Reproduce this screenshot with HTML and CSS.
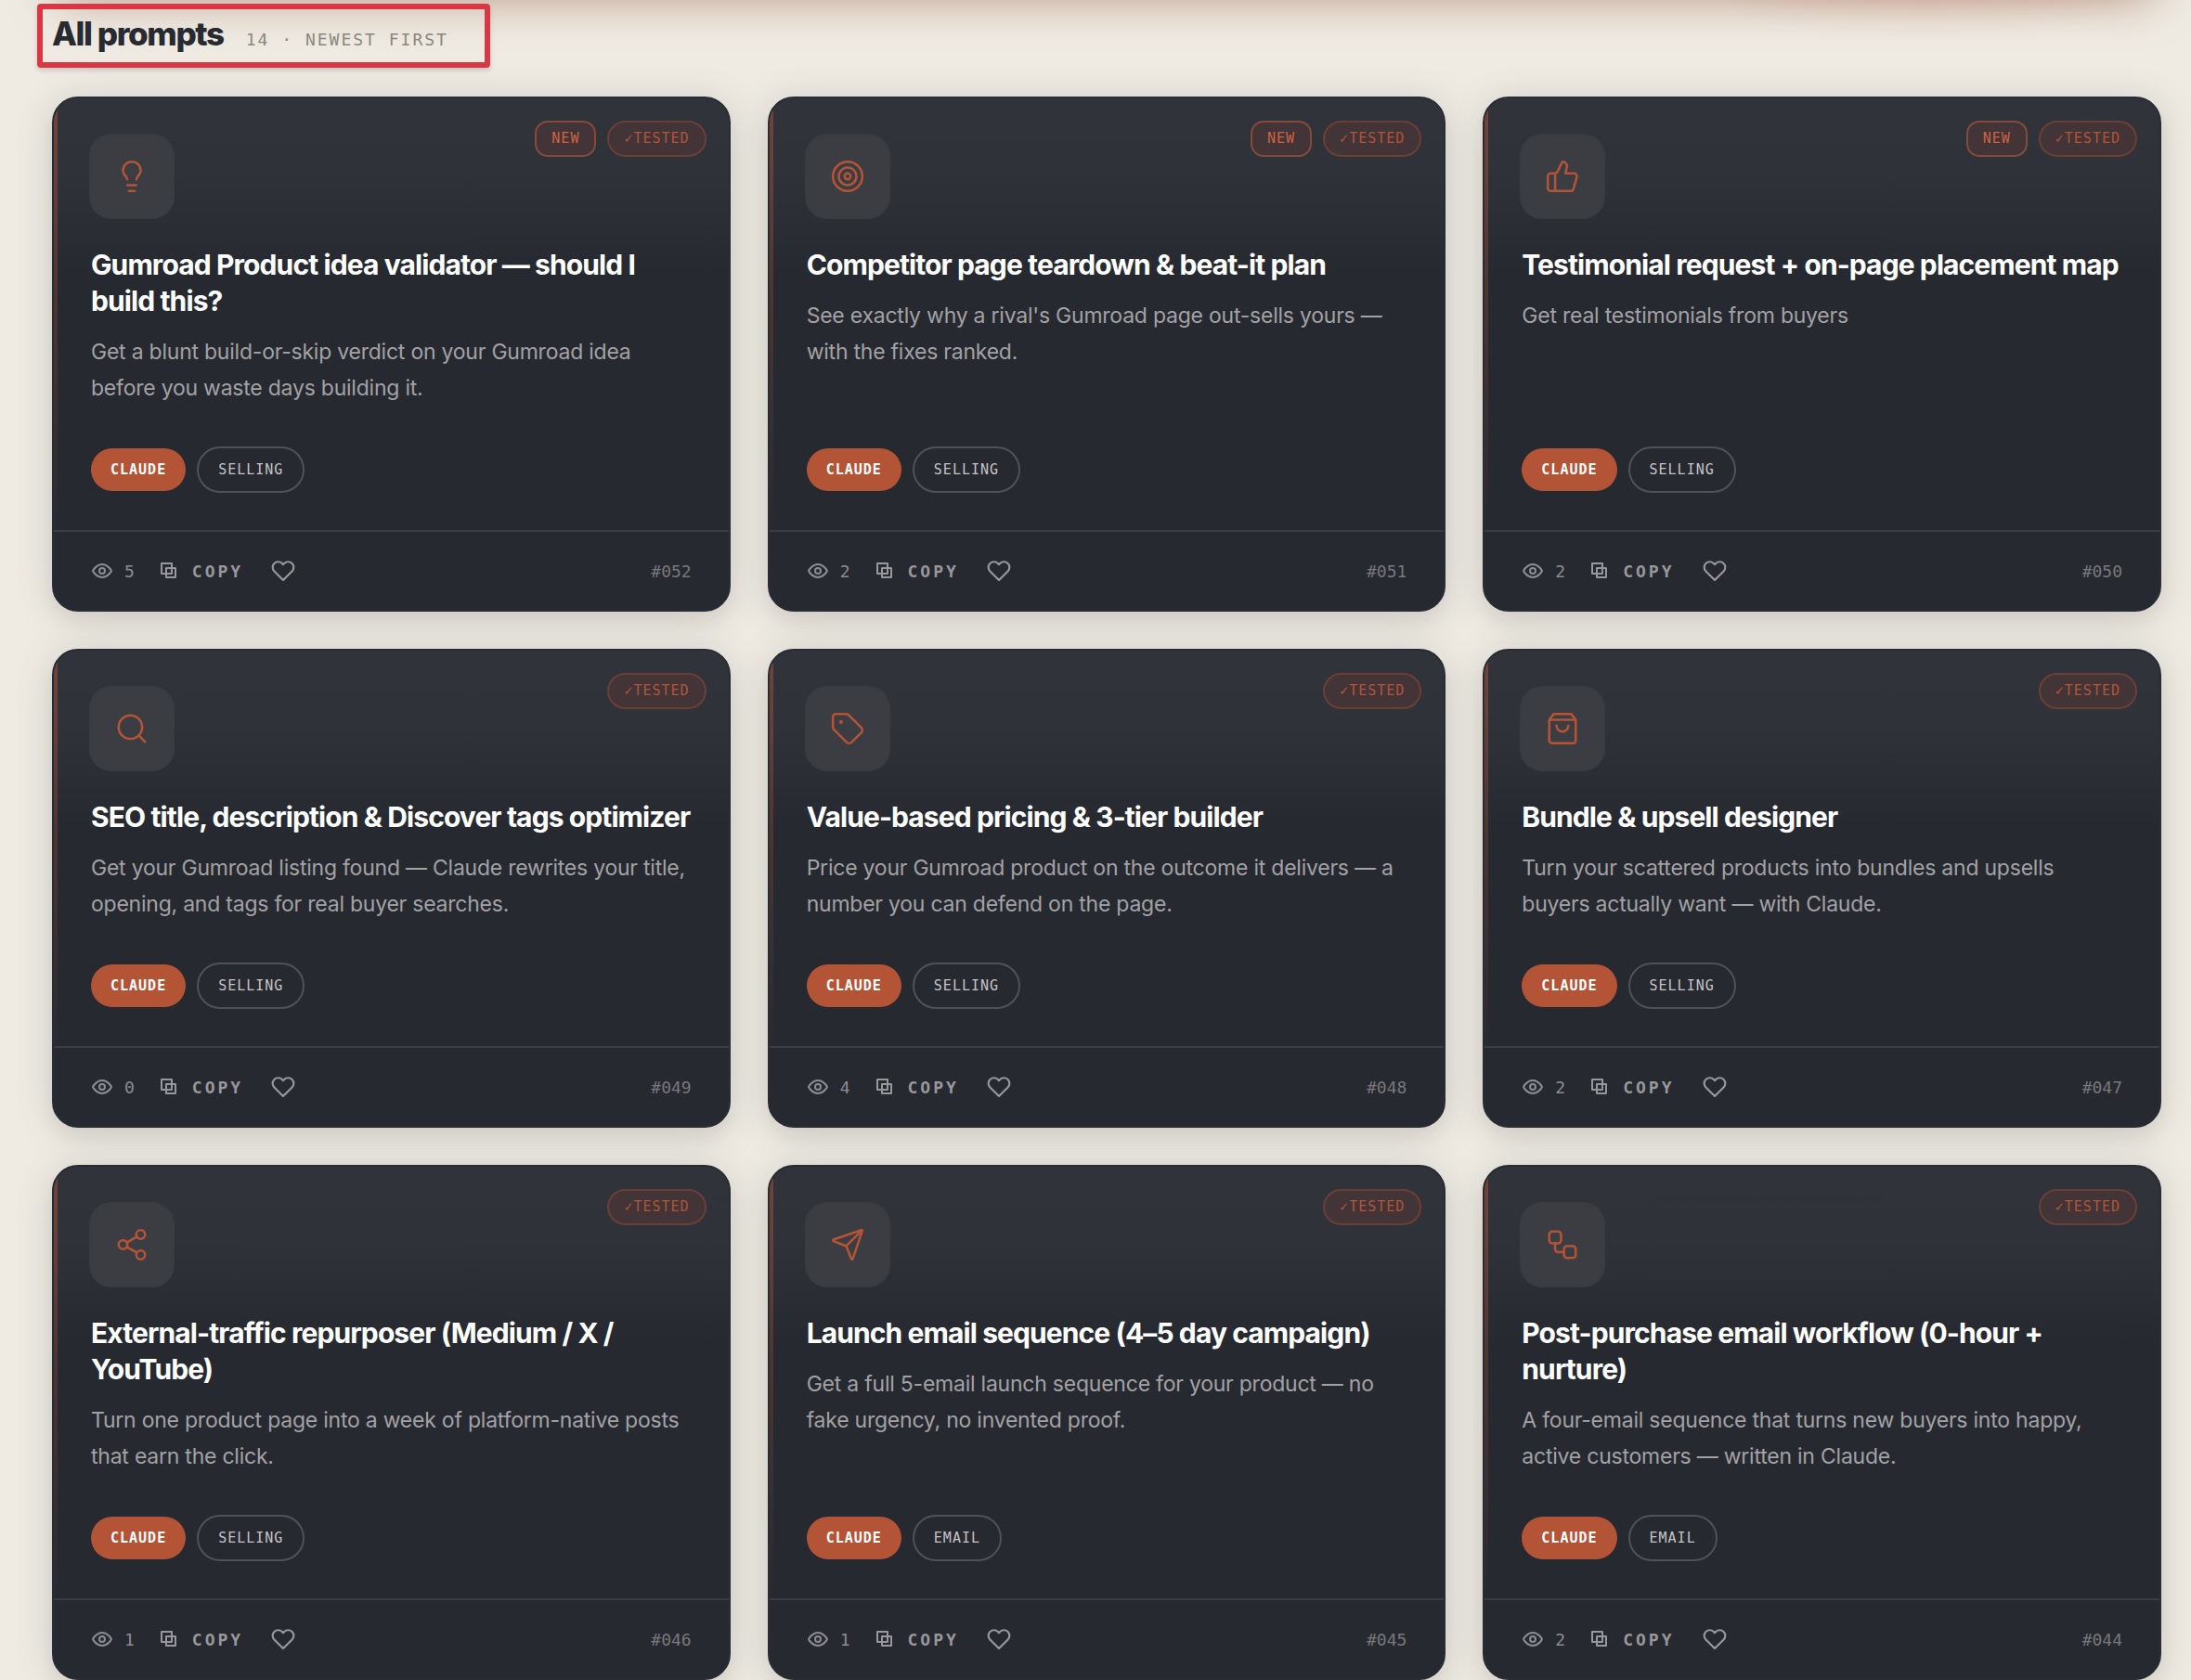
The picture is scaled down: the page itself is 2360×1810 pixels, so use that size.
FILE: index.html
```html
<!DOCTYPE html>
<html lang="en">

<head>
  <meta charset="UTF-8">
  <meta name="viewport" content="width=device-width, initial-scale=1.0">
  <title>All prompts</title>
  <link rel="stylesheet" href="styles.css">
</head>

<body>
  <!-- Icons -->
  <svg class="sprite" aria-hidden="true">
    <symbol id="bulb" viewBox="0 0 24 24"><path d="M15.09 14c.18-.98.65-1.74 1.41-2.5A4.65 4.65 0 0 0 18 8 6 6 0 0 0 6 8c0 1 .23 2.23 1.5 3.5A4.61 4.61 0 0 1 8.91 14M9 18h6M10 22h4"/></symbol>
    <symbol id="target" viewBox="0 0 24 24"><circle cx="12" cy="12" r="10"/><circle cx="12" cy="12" r="6"/><circle cx="12" cy="12" r="2"/></symbol>
    <symbol id="thumb" viewBox="0 0 24 24"><path d="M7 10v12M15 5.88 14 10h5.83a2 2 0 0 1 1.92 2.56l-2.33 8A2 2 0 0 1 17.5 22H4a2 2 0 0 1-2-2v-8a2 2 0 0 1 2-2h2.76a2 2 0 0 0 1.79-1.11L12 2a3.13 3.13 0 0 1 3 3.88Z"/></symbol>
    <symbol id="search" viewBox="0 0 24 24"><circle cx="11" cy="11" r="8"/><path d="m21 21-4.3-4.3"/></symbol>
    <symbol id="tag" viewBox="0 0 24 24"><path d="M12.586 2.586A2 2 0 0 0 11.172 2H4a2 2 0 0 0-2 2v7.172a2 2 0 0 0 .586 1.414l8.704 8.704a2.426 2.426 0 0 0 3.42 0l6.58-6.58a2.426 2.426 0 0 0 0-3.42z"/><circle cx="7.5" cy="7.5" r=".5"/></symbol>
    <symbol id="bag" viewBox="0 0 24 24"><path d="M6 2 3 6v14a2 2 0 0 0 2 2h14a2 2 0 0 0 2-2V6l-3-4ZM3 6h18M16 10a4 4 0 0 1-8 0"/></symbol>
    <symbol id="share" viewBox="0 0 24 24"><circle cx="18" cy="5" r="3"/><circle cx="6" cy="12" r="3"/><circle cx="18" cy="19" r="3"/><path d="m8.59 13.51 6.83 3.98M15.41 6.51l-6.82 3.98"/></symbol>
    <symbol id="send" viewBox="0 0 24 24"><path d="M14.536 21.686a.5.5 0 0 0 .937-.024l6.5-19a.496.496 0 0 0-.635-.635l-19 6.5a.5.5 0 0 0-.024.937l7.93 3.18a2 2 0 0 1 1.112 1.11zM21.854 2.147l-10.94 10.939"/></symbol>
    <symbol id="flow" viewBox="0 0 24 24"><rect x="3" y="3" width="8" height="8" rx="2"/><path d="M7 11v4a2 2 0 0 0 2 2h4"/><rect x="13" y="13" width="8" height="8" rx="2"/></symbol>
    <symbol id="eye" viewBox="0 0 24 24"><path d="M2 12s3.5-7 10-7 10 7 10 7-3.5 7-10 7-10-7-10-7Z"/><circle cx="12" cy="12" r="3"/></symbol>
    <symbol id="copy" viewBox="0 0 18 18"><path d="M1 1h11v11H1zM6 6h10v10H6z"/></symbol>
    <symbol id="heart" viewBox="0 0 24 24"><path d="M20.84 4.61a5.5 5.5 0 0 0-7.78 0L12 5.67l-1.06-1.06a5.5 5.5 0 0 0-7.78 7.78L12 21.23l8.84-8.84a5.5 5.5 0 0 0 0-7.78z"/></symbol>
  </svg>

  <div class="hero-edge"></div>

  <main class="page">
    <header class="section-head">
      <h2>All prompts</h2>
      <span class="count">14 · NEWEST FIRST</span>
      <div class="marker"></div>
    </header>

    <section class="grid">
      <article class="card">
        <div class="badges"><span class="badge new">NEW</span><span class="badge">✓TESTED</span></div>
        <div class="card-body">
          <div class="tile"><svg><use href="#bulb"/></svg></div>
          <h3>Gumroad Product idea validator — should I build this?</h3>
          <p>Get a blunt build-or-skip verdict on your Gumroad idea before you waste days building it.</p>
          <div class="tags"><span class="tag tool">CLAUDE</span><span class="tag">SELLING</span></div>
        </div>
        <footer class="card-foot">
          <span class="views"><svg><use href="#eye"/></svg>5</span>
          <button class="copy" type="button"><svg><use href="#copy"/></svg>COPY</button>
          <button class="like" type="button" aria-label="Like"><svg><use href="#heart"/></svg></button>
          <span class="num">#052</span>
        </footer>
      </article>

      <article class="card">
        <div class="badges"><span class="badge new">NEW</span><span class="badge">✓TESTED</span></div>
        <div class="card-body">
          <div class="tile"><svg><use href="#target"/></svg></div>
          <h3>Competitor page teardown &amp; beat-it plan</h3>
          <p>See exactly why a rival's Gumroad page out-sells yours — with the fixes ranked.</p>
          <div class="tags"><span class="tag tool">CLAUDE</span><span class="tag">SELLING</span></div>
        </div>
        <footer class="card-foot">
          <span class="views"><svg><use href="#eye"/></svg>2</span>
          <button class="copy" type="button"><svg><use href="#copy"/></svg>COPY</button>
          <button class="like" type="button" aria-label="Like"><svg><use href="#heart"/></svg></button>
          <span class="num">#051</span>
        </footer>
      </article>

      <article class="card">
        <div class="badges"><span class="badge new">NEW</span><span class="badge">✓TESTED</span></div>
        <div class="card-body">
          <div class="tile"><svg><use href="#thumb"/></svg></div>
          <h3>Testimonial request + on-page placement map</h3>
          <p>Get real testimonials from buyers</p>
          <div class="tags"><span class="tag tool">CLAUDE</span><span class="tag">SELLING</span></div>
        </div>
        <footer class="card-foot">
          <span class="views"><svg><use href="#eye"/></svg>2</span>
          <button class="copy" type="button"><svg><use href="#copy"/></svg>COPY</button>
          <button class="like" type="button" aria-label="Like"><svg><use href="#heart"/></svg></button>
          <span class="num">#050</span>
        </footer>
      </article>

      <article class="card">
        <div class="badges"><span class="badge">✓TESTED</span></div>
        <div class="card-body">
          <div class="tile"><svg><use href="#search"/></svg></div>
          <h3>SEO title, description &amp; Discover tags optimizer</h3>
          <p>Get your Gumroad listing found — Claude rewrites your title, opening, and tags for real buyer searches.</p>
          <div class="tags"><span class="tag tool">CLAUDE</span><span class="tag">SELLING</span></div>
        </div>
        <footer class="card-foot">
          <span class="views"><svg><use href="#eye"/></svg>0</span>
          <button class="copy" type="button"><svg><use href="#copy"/></svg>COPY</button>
          <button class="like" type="button" aria-label="Like"><svg><use href="#heart"/></svg></button>
          <span class="num">#049</span>
        </footer>
      </article>

      <article class="card">
        <div class="badges"><span class="badge">✓TESTED</span></div>
        <div class="card-body">
          <div class="tile"><svg><use href="#tag"/></svg></div>
          <h3>Value-based pricing &amp; 3-tier builder</h3>
          <p>Price your Gumroad product on the outcome it delivers — a number you can defend on the page.</p>
          <div class="tags"><span class="tag tool">CLAUDE</span><span class="tag">SELLING</span></div>
        </div>
        <footer class="card-foot">
          <span class="views"><svg><use href="#eye"/></svg>4</span>
          <button class="copy" type="button"><svg><use href="#copy"/></svg>COPY</button>
          <button class="like" type="button" aria-label="Like"><svg><use href="#heart"/></svg></button>
          <span class="num">#048</span>
        </footer>
      </article>

      <article class="card">
        <div class="badges"><span class="badge">✓TESTED</span></div>
        <div class="card-body">
          <div class="tile"><svg><use href="#bag"/></svg></div>
          <h3>Bundle &amp; upsell designer</h3>
          <p>Turn your scattered products into bundles and upsells buyers actually want — with Claude.</p>
          <div class="tags"><span class="tag tool">CLAUDE</span><span class="tag">SELLING</span></div>
        </div>
        <footer class="card-foot">
          <span class="views"><svg><use href="#eye"/></svg>2</span>
          <button class="copy" type="button"><svg><use href="#copy"/></svg>COPY</button>
          <button class="like" type="button" aria-label="Like"><svg><use href="#heart"/></svg></button>
          <span class="num">#047</span>
        </footer>
      </article>

      <article class="card">
        <div class="badges"><span class="badge">✓TESTED</span></div>
        <div class="card-body">
          <div class="tile"><svg><use href="#share"/></svg></div>
          <h3>External-traffic repurposer (Medium / X / YouTube)</h3>
          <p>Turn one product page into a week of platform-native posts that earn the click.</p>
          <div class="tags"><span class="tag tool">CLAUDE</span><span class="tag">SELLING</span></div>
        </div>
        <footer class="card-foot">
          <span class="views"><svg><use href="#eye"/></svg>1</span>
          <button class="copy" type="button"><svg><use href="#copy"/></svg>COPY</button>
          <button class="like" type="button" aria-label="Like"><svg><use href="#heart"/></svg></button>
          <span class="num">#046</span>
        </footer>
      </article>

      <article class="card">
        <div class="badges"><span class="badge">✓TESTED</span></div>
        <div class="card-body">
          <div class="tile"><svg><use href="#send"/></svg></div>
          <h3>Launch email sequence (4–5 day campaign)</h3>
          <p>Get a full 5-email launch sequence for your product — no fake urgency, no invented proof.</p>
          <div class="tags"><span class="tag tool">CLAUDE</span><span class="tag">EMAIL</span></div>
        </div>
        <footer class="card-foot">
          <span class="views"><svg><use href="#eye"/></svg>1</span>
          <button class="copy" type="button"><svg><use href="#copy"/></svg>COPY</button>
          <button class="like" type="button" aria-label="Like"><svg><use href="#heart"/></svg></button>
          <span class="num">#045</span>
        </footer>
      </article>

      <article class="card">
        <div class="badges"><span class="badge">✓TESTED</span></div>
        <div class="card-body">
          <div class="tile"><svg><use href="#flow"/></svg></div>
          <h3>Post-purchase email workflow (0-hour + nurture)</h3>
          <p>A four-email sequence that turns new buyers into happy, active customers — written in Claude.</p>
          <div class="tags"><span class="tag tool">CLAUDE</span><span class="tag">EMAIL</span></div>
        </div>
        <footer class="card-foot">
          <span class="views"><svg><use href="#eye"/></svg>2</span>
          <button class="copy" type="button"><svg><use href="#copy"/></svg>COPY</button>
          <button class="like" type="button" aria-label="Like"><svg><use href="#heart"/></svg></button>
          <span class="num">#044</span>
        </footer>
      </article>
    </section>
  </main>
</body>

</html>
```
FILE: styles.css
```css
* {
  box-sizing: border-box;
}

body {
  margin: 0;
  background-color: #efebe3;
  color: #282a31;
  font-family: Inter, "Liberation Sans", sans-serif;
  overflow-x: hidden;
}

h2,
h3,
p {
  margin: 0;
}

svg {
  display: block;
  fill: none;
  stroke: currentColor;
  stroke-linecap: round;
  stroke-linejoin: round;
}

.sprite {
  position: absolute;
  width: 0;
  height: 0;
}

/* bottom shadow of the block above the list */
.hero-edge {
  position: relative;
  height: 60px;
  margin: -60px 32px 0 56px;
  border-radius: 40px;
  box-shadow: 0 0 48px rgba(140, 75, 50, 0.5);
}

.hero-edge::after {
  content: "";
  position: absolute;
  right: 60px;
  bottom: 0;
  width: 17%;
  height: 60px;
  border-radius: 50%;
  box-shadow: 0 0 40px rgba(179, 84, 55, 0.2);
}

.page {
  padding: 0 32px 0 56px;
}

.section-head {
  position: relative;
  display: flex;
  align-items: baseline;
  gap: 24px;
  padding: 12px 0 44px;
}

.section-head h2 {
  font-size: 35px;
  line-height: 48px;
  font-weight: 800;
  letter-spacing: -0.04em;
}

.count,
.badge,
.tag,
.card-foot {
  font-family: "DejaVu Sans Mono", monospace;
}

.count {
  color: #8a877c;
  font-size: 18px;
  letter-spacing: 2px;
}

/* red outline over the heading */
.marker {
  position: absolute;
  top: 4px;
  left: -16px;
  width: 488px;
  height: 69px;
  border: 6px solid #d93744;
  border-radius: 4px;
  box-shadow: 0 3px 5px rgba(0, 0, 0, 0.15);
}

.grid {
  display: grid;
  grid-template-columns: repeat(3, 1fr);
  gap: 40px;
}

.card {
  position: relative;
  display: flex;
  flex-direction: column;
  overflow: hidden;
  border: 2px solid #2a2c33;
  border-radius: 28px;
  background: linear-gradient(#30333a, #2f3239 80px, #272930 190px);
  box-shadow: 0 4px 40px rgba(60, 80, 75, 0.2), 0 12px 16px rgba(90, 50, 50, 0.05);
}

.card::before {
  content: "";
  position: absolute;
  top: 0;
  left: 0;
  width: 4px;
  height: 100%;
  background: linear-gradient(rgba(179, 84, 55, 0.5), rgba(179, 84, 55, 0) 85%);
}

.badges {
  position: absolute;
  top: 24px;
  right: 24px;
  display: flex;
  gap: 12px;
}

.badge {
  padding: 0 16px;
  border: 2px solid #6b3f35;
  border-radius: 20px;
  background-color: #433537;
  color: #b35437;
  font-size: 15px;
  line-height: 35px;
  letter-spacing: 1px;
}

.badge.new {
  border-color: #844a3a;
  border-radius: 14px;
  color: #cf6243;
}

.card-body {
  display: flex;
  flex: 1;
  flex-direction: column;
  padding: 40px;
}

.tile {
  display: flex;
  align-items: center;
  justify-content: center;
  width: 88px;
  height: 88px;
  margin-bottom: 32px;
  border-radius: 22px;
  background-color: #3c3d42;
  box-shadow: 0 0 0 2px #3b3c40;
  color: #b35437;
}

.tile svg {
  width: 38px;
  height: 38px;
  stroke-width: 1.6;
}

.card h3 {
  margin-bottom: 16px;
  color: #fff;
  font-size: 30px;
  line-height: 39px;
  font-weight: 700;
  letter-spacing: -0.03em;
}

.card p {
  margin-bottom: 43px;
  color: #a2a2a5;
  font-size: 23px;
  line-height: 39px;
  letter-spacing: -0.01em;
}

.tags {
  display: flex;
  align-items: center;
  gap: 12px;
  margin-top: auto;
}

.tag {
  padding: 0 21px;
  border: 2px solid #505257;
  border-radius: 25px;
  color: #c4c4c6;
  font-size: 15px;
  line-height: 46px;
  letter-spacing: 1px;
}

.tag.tool {
  border: none;
  background-color: #b35437;
  color: #fff;
  font-weight: 700;
}

.card-foot {
  display: flex;
  align-items: center;
  height: 86px;
  padding: 0 40px;
  border-top: 2px solid #3c3d41;
  color: #8d8d90;
  font-size: 18px;
}

.card-foot button {
  display: flex;
  align-items: center;
  padding: 0;
  border: none;
  background: none;
  color: #98989b;
  font: inherit;
  cursor: pointer;
}

.views {
  display: flex;
  align-items: center;
  gap: 12px;
  margin-right: 28px;
}

.card-foot svg {
  width: 24px;
  height: 24px;
  stroke-width: 2;
}

.card-foot .copy {
  gap: 16px;
  margin-right: 30px;
  font-weight: 700;
  letter-spacing: 3px;
}

.card-foot .copy svg {
  width: 18px;
  height: 18px;
}

.card-foot .like svg {
  width: 26px;
  height: 26px;
}

.num {
  margin-left: auto;
  color: #77787b;
}
```
